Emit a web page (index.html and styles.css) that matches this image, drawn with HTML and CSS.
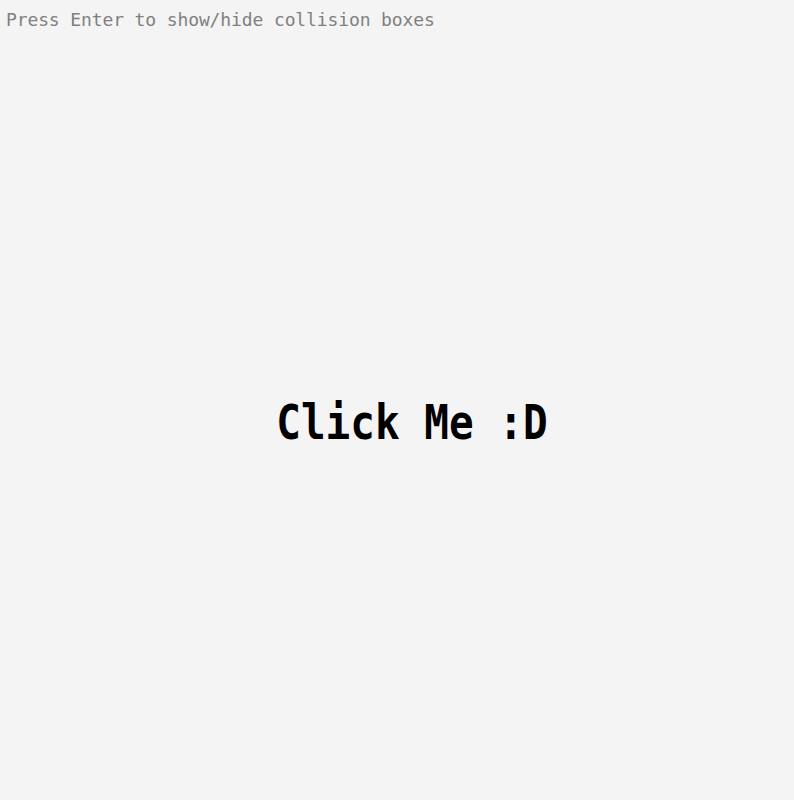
FILE: index.html
```html
<!DOCTYPE html>
<html>
<head>
<meta charset="utf-8">
<link rel="stylesheet" href="styles.css">
</head>
<body>
<div class="page">
  <div class="hint">Press Enter to show/hide collision boxes</div>
  <div class="stage">
    <button class="click-me">Click Me :D</button>
  </div>
</div>
</body>
</html>
```
FILE: styles.css
```css
html, body {
  margin: 0;
  padding: 0;
  background: #f4f4f4;
}
.page {
  height: 800px;
  display: flex;
  flex-direction: column;
  font-family: "DejaVu Sans Mono", monospace;
}
.hint {
  padding: 11px 0 0 6px;
  font-size: 18px;
  line-height: 18px;
  letter-spacing: -0.12px;
  color: #808080;
  white-space: nowrap;
}
.stage {
  flex: 1;
  display: flex;
  align-items: center;
  justify-content: center;
  padding-left: 30px;
  padding-top: 18px;
}
.click-me {
  background: none;
  border: none;
  padding: 0;
  font-family: "DejaVu Sans Mono", monospace;
  font-weight: bold;
  font-size: 41px;
  line-height: 41px;
  color: #000;
  transform: scaleY(1.17);
  cursor: pointer;
}
```
